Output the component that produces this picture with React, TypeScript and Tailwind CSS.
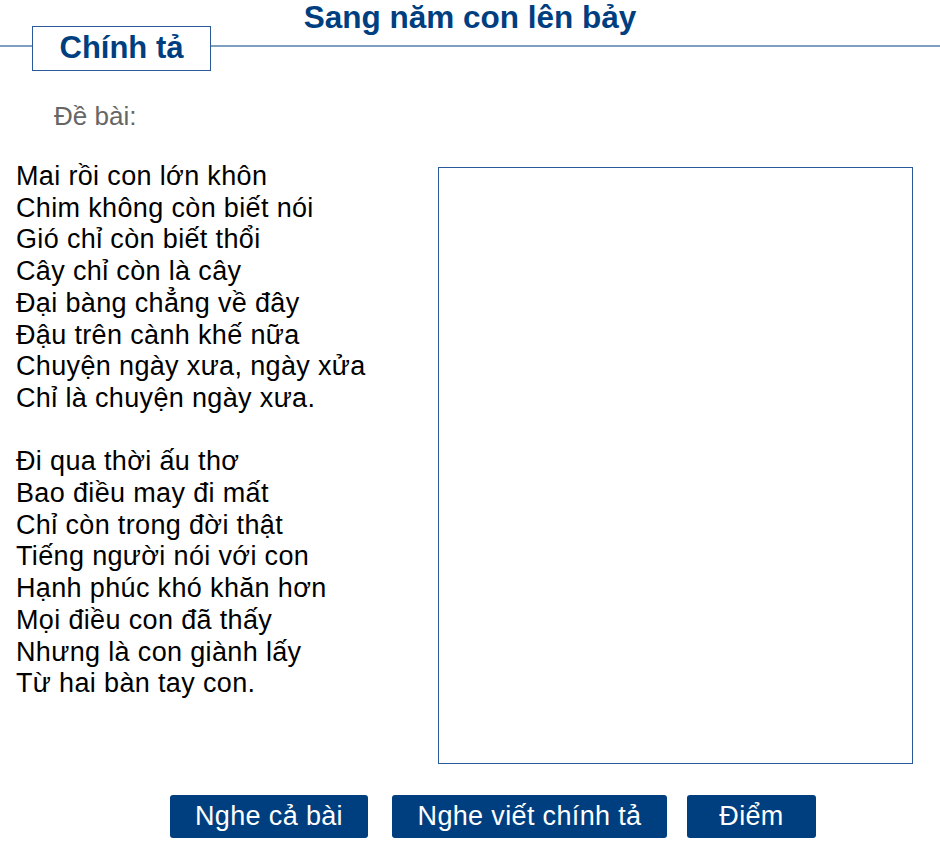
import React from "react";

const stanzas = [
  [
    "Mai rồi con lớn khôn",
    "Chim không còn biết nói",
    "Gió chỉ còn biết thổi",
    "Cây chỉ còn là cây",
    "Đại bàng chẳng về đây",
    "Đậu trên cành khế nữa",
    "Chuyện ngày xưa, ngày xửa",
    "Chỉ là chuyện ngày xưa.",
  ],
  [
    "Đi qua thời ấu thơ",
    "Bao điều may đi mất",
    "Chỉ còn trong đời thật",
    "Tiếng người nói với con",
    "Hạnh phúc khó khăn hơn",
    "Mọi điều con đã thấy",
    "Nhưng là con giành lấy",
    "Từ hai bàn tay con.",
  ],
];

const buttons = [
  { label: "Nghe cả bài", w: "w-[198px]" },
  { label: "Nghe viết chính tả", w: "w-[275px]" },
  { label: "Điểm", w: "w-[129px]" },
];

export default function App() {
  return (
    <div className="w-[940px] h-[865px] bg-white overflow-hidden font-['Liberation_Sans',Arial,sans-serif]">
      {/* header */}
      <div className="relative h-[72px]">
        <h1 className="text-center text-[31.5px] leading-[35px] font-bold text-[#003f7f]">
          Sang năm con lên bảy
        </h1>
        <div className="absolute left-0 right-0 top-[45px] h-[2px] bg-[#7f9fc0]" />
        <div className="absolute left-[32px] top-[26px] w-[179px] h-[45px] bg-white border border-[#2a5a9a] flex items-center justify-center text-[31px] font-bold text-[#003f7f]">
          Chính tả
        </div>
      </div>

      <div className="pl-[54px] pt-[29px] text-[26px] leading-[30px] text-[#666]">Đề bài:</div>

      <div className="flex mt-[30px]">
        <div className="w-[438px] pl-[16px] text-[27px] leading-[31.7px] tracking-[0.35px] text-black">
          {stanzas.map((lines, i) => (
            <div key={i} className={i > 0 ? "mt-[31.7px]" : ""}>
              {lines.map((l) => (
                <div key={l}>{l}</div>
              ))}
            </div>
          ))}
        </div>
        <div className="mt-[6px] w-[475px] h-[597px] border border-[#2a5a9a]" />
      </div>

      <div className="flex pl-[170px] mt-[31px]">
        {buttons.map((b, i) => (
          <button
            key={b.label}
            className={`${b.w} h-[43px] rounded-[3px] bg-[#003f7f] text-white text-[27px] tracking-[0.35px] ${
              i === 1 ? "ml-[24px]" : i === 2 ? "ml-[20px]" : ""
            }`}
          >
            {b.label}
          </button>
        ))}
      </div>
    </div>
  );
}
